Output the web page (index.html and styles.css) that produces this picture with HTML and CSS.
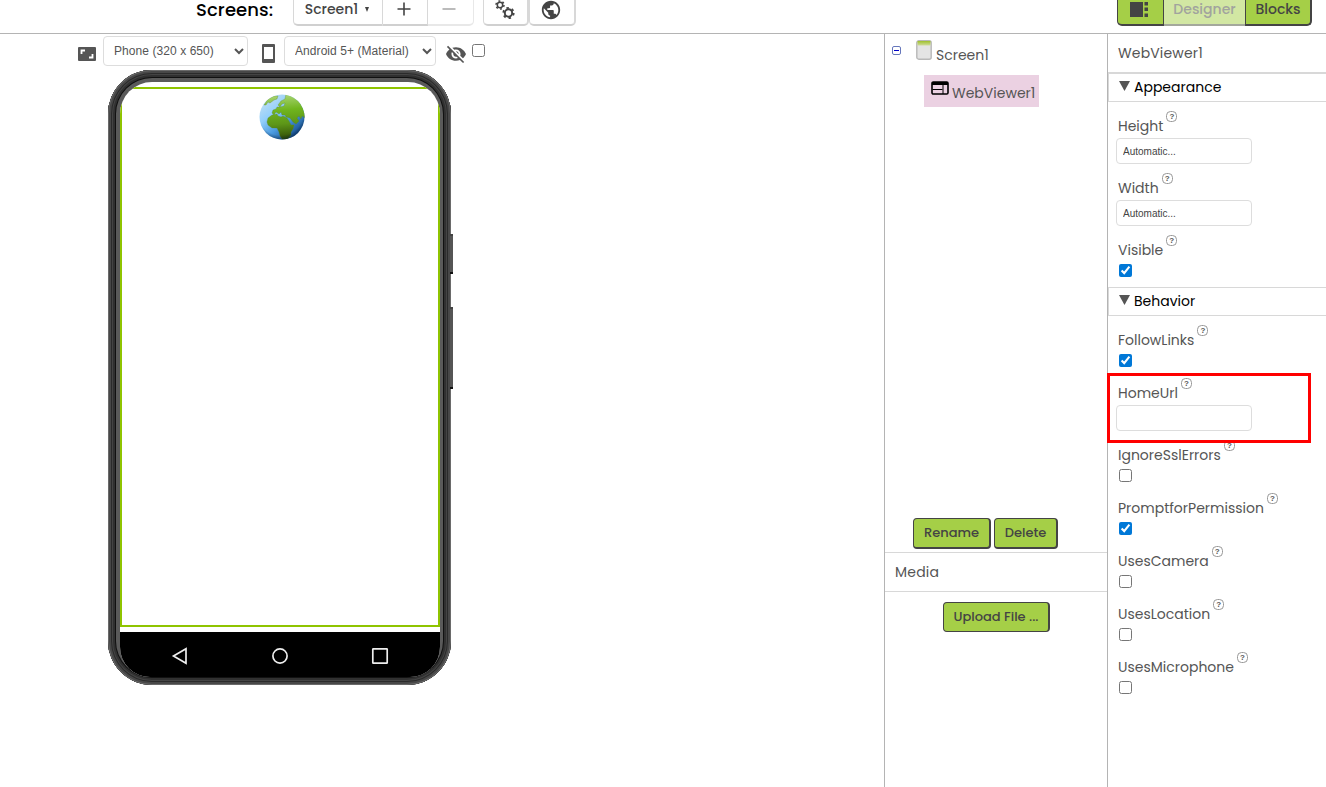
FILE: index.html
```html
<!DOCTYPE html>
<html lang="en">
<head>
    <meta charset="UTF-8">
    <meta name="viewport" content="width=device-width, initial-scale=1.0">
    <title>WebViewer - Designer</title>
    <link rel="stylesheet" href="styles.css">
</head>
<body>
    <header class="toolbar">
        <span class="toolbar-title">Screens:</span>
        <div class="btn-group screens-group">
            <button class="tool-btn screen-btn">Screen1 <span class="caret"></span></button>
            <button class="tool-btn add-btn"><svg width="14" height="14" viewBox="0 0 14 14"><path d="M7 0.5V13.5M0.5 7H13.5" stroke="#444" stroke-width="1.6"/></svg></button>
            <button class="tool-btn remove-btn"><svg width="14" height="14" viewBox="0 0 14 14"><path d="M0.5 7H13.5" stroke="#aaa" stroke-width="1.6"/></svg></button>
        </div>
        <div class="btn-group">
            <button class="tool-btn icon-btn">
                <svg width="20" height="20" viewBox="0 0 20 20" fill="none" stroke="#444">
                    <circle cx="5" cy="5" r="2.7" stroke-width="1.5"/>
                    <circle cx="5" cy="5" r="4" stroke-width="1.5" stroke-dasharray="1.9 2.29"/>
                    <circle cx="13.5" cy="13" r="3.7" stroke-width="2"/>
                    <circle cx="13.5" cy="13" r="5.2" stroke-width="1.8" stroke-dasharray="2.4 3.05"/>
                </svg>
            </button>
            <button class="tool-btn icon-btn">
                <svg width="22" height="22" viewBox="0 0 24 24"><path fill="#444" d="M12 2C6.48 2 2 6.48 2 12s4.48 10 10 10 10-4.48 10-10S17.520 2 12 2zm-1 17.930c-3.950-.490-7-3.850-7-7.930 0-.620.080-1.210.210-1.790L9 15v1c0 1.100.9 2 2 2v1.930zm6.900-2.540c-.260-.810-1-1.390-1.900-1.390h-1v-3c0-.550-.450-1-1-1H8v-2h2c.550 0 1-.450 1-1V7h2c1.100 0 2-.9 2-2v-.410c2.930 1.190 5 4.060 5 7.410 0 2.080-.8 3.970-2.100 5.390z"/></svg>
            </button>
        </div>
        <div class="view-group">
            <button class="view-btn gallery-btn">
                <svg width="18" height="15" viewBox="0 0 18 15" fill="#444"><path d="M0 0H13V15H0zM14.500 0H18V3.500H14.500zM14.500 5.500H18V9H14.500zM14.500 11.500H18V15H14.500z"/></svg>
            </button>
            <button class="view-btn designer-btn" disabled>Designer</button>
            <button class="view-btn blocks-btn">Blocks</button>
        </div>
    </header>

    <main class="workspace">
        <section class="viewer">
            <div class="viewer-options">
                <svg class="size-icon" width="18" height="14" viewBox="0 0 18 14"><rect width="18" height="14" rx="1" fill="#555"/><path d="M3.500 7V3.500H7M11 10.500H14.500V7" fill="none" stroke="#fff" stroke-width="1.800"/></svg>
                <select class="size-select"><option>Phone (320 x 650)</option></select>
                <svg class="phone-icon" width="13" height="19" viewBox="0 0 13 19"><rect width="13" height="19" rx="1" fill="#555"/><rect x="2" y="3" width="9" height="12" fill="#fff"/></svg>
                <select class="theme-select"><option>Android 5+ (Material)</option></select>
                <svg class="hidden-icon" width="20" height="20" viewBox="1 1 22 22"><path fill="#555" d="M12 7c2.760 0 5 2.240 5 5 0 .650-.130 1.260-.360 1.830l2.920 2.920c1.510-1.260 2.700-2.890 3.430-4.750-1.730-4.390-6-7.500-11-7.500-1.400 0-2.740.250-3.980.700l2.160 2.160C10.740 7.130 11.350 7 12 7zM2 4.270l2.280 2.280.460.460C3.080 8.300 1.780 10.020 1 12c1.730 4.390 6 7.500 11 7.500 1.550 0 3.030-.300 4.380-.840l.420.420L19.730 22 21 20.730 3.270 3 2 4.270zM7.530 9.800l1.550 1.550c-.050.210-.080.430-.080.650 0 1.660 1.340 3 3 3 .220 0 .440-.030.650-.080l1.550 1.550c-.670.330-1.410.530-2.200.530-2.760 0-5-2.240-5-5 0-.790.200-1.530.530-2.200zm4.310-.780l3.150 3.150.020-.160c0-1.660-1.340-3-3-3l-.170.010z"/></svg>
                <input type="checkbox" class="hidden-check">
            </div>

            <div class="phone">
                <span class="side-key power-key"></span>
                <span class="side-key volume-key"></span>
                <div class="screen">
                    <div class="web-viewer">
                        <svg width="46" height="46" viewBox="0 0 46 46">
                            <defs>
                                <linearGradient id="sea" x1="0" y1="0" x2="0.8" y2="1">
                                    <stop offset="0" stop-color="#d4e6ee"/>
                                    <stop offset="0.4" stop-color="#93cffb"/>
                                    <stop offset="0.65" stop-color="#4b9be0"/>
                                    <stop offset="1" stop-color="#0a3c78"/>
                                </linearGradient>
                                <linearGradient id="land" gradientUnits="userSpaceOnUse" x1="20" y1="0" x2="24" y2="46">
                                    <stop offset="0" stop-color="#add67a"/>
                                    <stop offset="0.35" stop-color="#70b51e"/>
                                    <stop offset="0.65" stop-color="#5d9618"/>
                                    <stop offset="1" stop-color="#2e4806"/>
                                </linearGradient>
                                <radialGradient id="shade" cx="0.47" cy="0.4" r="0.62">
                                    <stop offset="0.8" stop-color="#001830" stop-opacity="0"/>
                                    <stop offset="1" stop-color="#001830" stop-opacity="0.55"/>
                                </radialGradient>
                                <clipPath id="ball"><circle cx="23" cy="23" r="22.500"/></clipPath>
                            </defs>
                            <g clip-path="url(#ball)">
                                <rect width="46" height="46" fill="url(#sea)"/>
                                <g fill="url(#land)" stroke="#5c8226" stroke-width="0.3">
                                    <path d="M5 11L9 5L15 2L19 2L18 5L15 6L11 9L9 8L7 11z"/>
                                    <path d="M26 5L27 0H46V24L43 22L42 25L40 22L38 24L40 27L37 30L34 28L31 24L27 23L26 21L23 21L22 18L20 20L17 18L15 21L13 19L14 16L17 15L18 13L21 13L25 12L26 9L23 10L21 13L19 11L22 7z"/>
                                    <path d="M13 21L18 20L19 22L22 23L24 22L28 24L30 27L32 31L35 31L34 35L32 38L32 41L28 46L23 45L21 42L20 38L18 34L13 34L9 31L8 28L9 24z"/>
                                </g>
                                <rect width="46" height="46" fill="url(#shade)"/>
                            </g>
                        </svg>
                    </div>
                    <div class="nav-bar">
                        <svg width="20" height="20" viewBox="0 0 20 20"><path d="M3.500 10L16 2.700V17.300z"/></svg>
                        <svg width="20" height="20" viewBox="0 0 20 20"><circle cx="10" cy="10" r="7.100"/></svg>
                        <svg width="20" height="20" viewBox="0 0 20 20"><rect x="2.800" y="2.800" width="14.400" height="14.400" rx="0.500"/></svg>
                    </div>
                </div>
            </div>
        </section>

        <aside class="structure">
            <div class="tree">
                <div class="tree-row root-row">
                    <svg class="toggle" width="9" height="9" viewBox="0 0 9 9"><rect x="0.500" y="0.500" width="8" height="8" rx="1.500" fill="#fff" stroke="#6677bb"/><path d="M2 4.500H7" stroke="#0000c8"/></svg>
                    <svg class="form-icon" width="16" height="20" viewBox="0 0 16 20"><defs><linearGradient id="bar" x1="0" y1="0" x2="0" y2="1"><stop offset="0" stop-color="#9fc02c"/><stop offset="1" stop-color="#d0dc9c"/></linearGradient></defs><rect x="0.800" y="0.800" width="14.400" height="18.400" rx="2" fill="#e4e4e4" stroke="#b8b8b8" stroke-width="1.400"/><path d="M1.500 1H14.500V5.500H1.500z" fill="url(#bar)"/></svg>
                    <span class="tree-label">Screen1</span>
                </div>
                <div class="tree-row selected-row">
                    <svg class="web-icon" width="18" height="14" viewBox="0 0 18 14"><rect x="1" y="1" width="16" height="12" rx="1.300" fill="none" stroke="#000" stroke-width="1.600"/><path d="M1 1H17V4H1z"/><path d="M1.500 8.500H11.500M12 4V13" stroke="#000" stroke-width="1"/></svg>
                    <span class="tree-label">WebViewer1</span>
                </div>
            </div>
            <div class="tree-actions">
                <button class="green-btn rename-btn">Rename</button>
                <button class="green-btn delete-btn">Delete</button>
            </div>
            <h2 class="media-title">Media</h2>
            <div class="media-body">
                <button class="green-btn upload-btn">Upload File ...</button>
            </div>
        </aside>

        <aside class="properties">
            <h2 class="component-name">WebViewer1</h2>

            <h3 class="category"><i class="arrow"></i>Appearance</h3>
            <div class="props">
                <div class="prop">
                    <div class="prop-label"><span>Height</span><i class="help">?</i></div>
                    <input type="text" value="Automatic...">
                </div>
                <div class="prop">
                    <div class="prop-label"><span>Width</span><i class="help">?</i></div>
                    <input type="text" value="Automatic...">
                </div>
                <div class="prop check">
                    <div class="prop-label"><span>Visible</span><i class="help">?</i></div>
                    <input type="checkbox" checked>
                </div>
            </div>

            <h3 class="category"><i class="arrow"></i>Behavior</h3>
            <div class="props">
                <div class="prop check">
                    <div class="prop-label"><span>FollowLinks</span><i class="help">?</i></div>
                    <input type="checkbox" checked>
                </div>
                <div class="prop marked">
                    <div class="prop-label"><span>HomeUrl</span><i class="help">?</i></div>
                    <input type="text">
                </div>
                <div class="prop check">
                    <div class="prop-label"><span>IgnoreSslErrors</span><i class="help">?</i></div>
                    <input type="checkbox">
                </div>
                <div class="prop check">
                    <div class="prop-label"><span>PromptforPermission</span><i class="help">?</i></div>
                    <input type="checkbox" checked>
                </div>
                <div class="prop check">
                    <div class="prop-label"><span>UsesCamera</span><i class="help">?</i></div>
                    <input type="checkbox">
                </div>
                <div class="prop check">
                    <div class="prop-label"><span>UsesLocation</span><i class="help">?</i></div>
                    <input type="checkbox">
                </div>
                <div class="prop check">
                    <div class="prop-label"><span>UsesMicrophone</span><i class="help">?</i></div>
                    <input type="checkbox">
                </div>
            </div>
        </aside>
    </main>
</body>
</html>
```
FILE: styles.css
```css
* {
    box-sizing: border-box;
}
body {
    font-family: Poppins, Inter, sans-serif;
    font-size: 14px;
    margin: 0;
    height: 787px;
    overflow: hidden;
    color: #555;
    background-color: #fff;
}
button {
    font-family: inherit;
    margin: 0;
}
svg {
    display: block;
    flex: none;
}

/* top toolbar */
.toolbar {
    display: flex;
    align-items: flex-start;
    height: 34px;
    padding: 0 14px 0 196px;
    border-bottom: 1px solid #b4b4b4;
}
.toolbar-title {
    width: 97px;
    font-size: 18px;
    line-height: 20px;
    font-weight: 500;
    letter-spacing: 0.1px;
    color: #000;
    white-space: nowrap;
}
.btn-group {
    display: flex;
    height: 26px;
}
.screens-group {
    margin-right: 9px;
}
.tool-btn {
    display: flex;
    align-items: center;
    justify-content: center;
    height: 26px;
    padding: 0 2px 6px 0;
    border: 1px solid #d8d8d8;
    border-top: none;
    border-bottom: 2px solid #d0d0d0;
    background-color: #fff;
    color: #444;
    font-size: 14px;
    font-weight: 500;
}
.screen-btn {
    width: 90px;
    gap: 7px;
    border-radius: 0 0 0 5px;
}
.caret {
    border: 2.5px solid transparent;
    border-top: 5px solid #444;
    border-bottom: 0;
}
.add-btn {
    width: 45px;
    border-left: none;
}
.remove-btn {
    width: 46px;
    padding-right: 4px;
    border-left: none;
    border-color: #e8e8e8;
    border-radius: 0 0 5px 0;
}
.icon-btn {
    width: 46px;
    padding: 0 1px 4px 0;
    border-right-width: 2px;
    border-radius: 0 0 5px 5px;
}
.icon-btn:last-child {
    width: 47px;
    padding-right: 2px;
}
.view-group {
    display: flex;
    margin-left: auto;
}
.view-btn {
    display: flex;
    align-items: center;
    justify-content: center;
    height: 26px;
    padding: 0 0 5px;
    border: 1px solid #444;
    border-top: none;
    border-bottom-width: 2px;
    background-color: #a5cf47;
    color: #444;
    font-size: 14px;
    font-weight: 500;
}
.gallery-btn {
    width: 47px;
    padding-right: 3px;
    border-radius: 0 0 0 5px;
}
.designer-btn {
    width: 81px;
    border-color: #a4a89c;
    border-left: none;
    border-right: none;
    background-color: #d2e7a3;
    color: #a1a39e;
}
.blocks-btn {
    width: 67px;
    border-right-width: 2px;
    border-radius: 0 0 5px 0;
}

.workspace {
    display: grid;
    grid-template-columns: 884px 223px 219px;
    height: 753px;
}

/* viewer */
.viewer-options {
    display: flex;
    align-items: flex-start;
    height: 36px;
    padding: 2px 0 0 78px;
}
.viewer-options select {
    height: 30px;
    padding: 0 0 0 5px;
    border: 1px solid #ddd;
    border-radius: 4px;
    background-color: #fff;
    color: #555;
    font-family: "Liberation Sans", Arial, sans-serif;
    font-size: 12px;
    letter-spacing: 0.07px;
}
.size-icon {
    margin: 11px 7px 0 0;
}
.viewer-options .size-select {
    width: 145px;
    padding-left: 6px;
}
.phone-icon {
    margin: 8px 9px 0 14px;
}
.viewer-options .theme-select {
    width: 152px;
    padding-left: 6px;
}
.hidden-icon {
    margin: 8px 6px 0 10px;
}
.hidden-check {
    margin: 8px 0 0;
}
.phone {
    position: relative;
    width: 343px;
    height: 615px;
    margin-left: 108px;
    padding: 12px 11px 8px 12px;
    border-radius: 44px;
    background-color: #5a5a5a;
    box-shadow: inset 0 0 0 1px #6a6a6a, inset 0 0 0 3px #484848, inset 0 0 0 4px #2b2b2b, inset 0 0 0 5px #444, inset 0 0 0 7px #303030, inset 0 0 0 8px #111;
}
.side-key {
    position: absolute;
    right: -2px;
    width: 3px;
    background-color: #555;
    border-top: 2px solid #444;
    border-bottom: 2px solid #111;
}
.power-key {
    top: 164px;
    height: 40px;
}
.volume-key {
    top: 237px;
    height: 82px;
}
.screen {
    height: 595px;
    padding-top: 5px;
    border-radius: 32px 32px 30px 30px;
    overflow: hidden;
    background-color: #fff;
}
.web-viewer {
    display: flex;
    justify-content: center;
    height: 540px;
    padding: 5px 0 0 4px;
    border: 2px solid #8fc400;
}
.nav-bar {
    display: flex;
    justify-content: space-between;
    align-items: center;
    height: 45px;
    margin-top: 5px;
    padding: 3px 50px 0;
    background-color: #000;
}
.nav-bar svg {
    fill: none;
    stroke: #eee;
    stroke-width: 1.7;
}

/* component tree and media */
.structure {
    display: flex;
    flex-direction: column;
    border-left: 1px solid #b4b4b4;
}
.tree {
    height: 484px;
    padding-left: 7px;
}
.tree-row {
    display: flex;
    align-items: flex-start;
}
.root-row {
    height: 41px;
    padding-top: 6px;
}
.toggle {
    margin: 6px 15px 0 0;
}
.form-icon {
    margin-right: 4px;
}
.tree-label {
    line-height: 20px;
    white-space: nowrap;
}
.root-row .tree-label {
    margin-top: 5px;
}
.selected-row {
    width: 115px;
    height: 32px;
    margin-left: 32px;
    padding: 6px 0 0 7px;
    background-color: #ebd1e2;
}
.web-icon {
    margin-right: 3px;
}
.selected-row .tree-label {
    margin-top: 2px;
}
.tree-actions {
    display: flex;
    gap: 3px;
    height: 35px;
    padding-left: 28px;
    border-bottom: 1px solid #d8d8d8;
}
.green-btn {
    height: 31px;
    padding: 0;
    border: 1px solid #444;
    border-right-width: 2px;
    border-bottom-width: 2px;
    border-radius: 4px;
    background-color: #a5cf47;
    color: #444;
    font-size: 13px;
    font-weight: 500;
}
.rename-btn {
    width: 78px;
}
.delete-btn {
    width: 64px;
}
.media-title {
    height: 39px;
    margin: 0;
    padding-left: 10px;
    border-bottom: 1px solid #d8d8d8;
    font-size: 14px;
    font-weight: 400;
    line-height: 38px;
    letter-spacing: 0.2px;
}
.media-body {
    padding: 10px 0 0 58px;
}
.upload-btn {
    width: 107px;
    height: 30px;
    border-bottom-width: 1px;
}

/* properties */
.properties {
    border-left: 1px solid #b4b4b4;
}
.component-name {
    height: 39px;
    margin: 0;
    padding-left: 10px;
    border-bottom: 1px solid #d8d8d8;
    font-size: 14px;
    font-weight: 400;
    line-height: 38px;
    letter-spacing: 0.15px;
}
.category {
    display: flex;
    align-items: center;
    gap: 4px;
    height: 29px;
    margin: 0;
    padding-left: 9px;
    border: 1px solid #d8d8d8;
    border-right: none;
    color: #000;
    font-size: 14px;
    font-weight: 400;
}
.arrow {
    width: 11px;
    height: 10px;
    margin: -3px 0 0 1px;
    background-color: #555;
    clip-path: polygon(0 0, 100% 0, 50% 100%);
}
.props {
    padding-top: 8px;
}
.prop {
    height: 62px;
    padding-left: 8px;
}
.prop.check {
    height: 53px;
}
.prop-label {
    display: flex;
    align-items: flex-start;
    gap: 3px;
    height: 28px;
    padding-left: 2px;
}
.prop-label span {
    line-height: 32px;
    white-space: nowrap;
}
.help {
    width: 11px;
    height: 11px;
    margin-top: 1px;
    border: 1px solid #999;
    border-radius: 4.5px;
    font: bold 8px/9px "Liberation Sans", Arial, sans-serif;
    text-align: center;
    color: #555;
}
.prop input[type="text"] {
    display: block;
    width: 136px;
    height: 26px;
    padding: 0 6px;
    border: 1px solid #ddd;
    border-radius: 4px;
    color: #444;
    font-family: "Liberation Sans", Arial, sans-serif;
    font-size: 10px;
}
input[type="checkbox"] {
    display: block;
    width: 13px;
    height: 13px;
    accent-color: #0078d7;
}
.prop input[type="checkbox"] {
    margin: 2px 0 0 3px;
}

/* red frame round the HomeUrl property */
.marked {
    position: relative;
}
.marked::after {
    content: "";
    box-sizing: border-box;
    position: absolute;
    top: -4px;
    left: -1px;
    width: 204px;
    height: 70px;
    border: 3px solid #f00;
    pointer-events: none;
}
```
